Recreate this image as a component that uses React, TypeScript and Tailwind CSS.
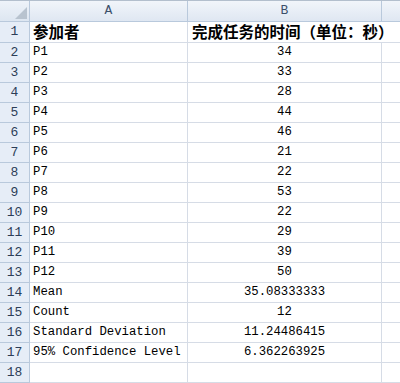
const ROWS: [string, string][] = [
  ["P1", "34"],
  ["P2", "33"],
  ["P3", "28"],
  ["P4", "44"],
  ["P5", "46"],
  ["P6", "21"],
  ["P7", "22"],
  ["P8", "53"],
  ["P9", "22"],
  ["P10", "29"],
  ["P11", "39"],
  ["P12", "50"],
  ["Mean", "35.08333333"],
  ["Count", "12"],
  ["Standard Deviation", "11.24486415"],
  ["95% Confidence Level", "6.362263925"],
  ["", ""],
];

const mono = { fontFamily: '"Liberation Mono", "Noto Sans CJK SC", monospace' };
const cjk = { fontFamily: '"Noto Sans CJK SC", sans-serif' };

function RowHead({ n }: { n: number }) {
  return (
    <div className="w-[30px] shrink-0 flex items-center justify-center bg-[#e6edf7] border-r border-b border-[#b9c9dc] text-[13px] text-[#2c3d57]">
      {n}
    </div>
  );
}

export default function App() {
  return (
    <div className="w-[400px] h-[383px] overflow-hidden bg-white select-none" style={mono}>
      {/* column headers */}
      <div className="flex h-[22px] border-t border-[#b3bfcd]">
        <div className="relative w-[30px] shrink-0 bg-gradient-to-b from-[#eef3f9] to-[#dde6f1] border-r border-b border-[#b9c9dc]">
          <div
            className="absolute right-[2px] bottom-[2px] w-[12px] h-[12px] bg-[#b8c3cf]"
            style={{ clipPath: "polygon(100% 0, 100% 100%, 0 100%)" }}
          />
        </div>
        <div className="w-[158px] shrink-0 flex items-center justify-center bg-gradient-to-b from-[#f1f5fa] to-[#dfe7f2] border-r border-b border-[#b9c9dc] text-[13px] text-[#3c4f6a]">
          A
        </div>
        <div className="w-[194px] shrink-0 flex items-center justify-center bg-gradient-to-b from-[#f1f5fa] to-[#dfe7f2] border-r border-b border-[#b9c9dc] text-[13px] text-[#3c4f6a]">
          B
        </div>
        <div className="flex-1 bg-gradient-to-b from-[#f1f5fa] to-[#dfe7f2] border-b border-[#b9c9dc]" />
      </div>

      {/* row 1: headings, B1 spills into C1 */}
      <div className="flex h-[21px]">
        <RowHead n={1} />
        <div
          className="w-[158px] shrink-0 flex items-center pl-[3px] border-r border-b border-[#d6dce6] text-[15.5px] font-bold text-black whitespace-nowrap"
          style={cjk}
        >
          参加者
        </div>
        <div
          className="relative z-10 w-[194px] shrink-0 flex items-center pl-[4px] border-b border-[#d6dce6] text-[15.5px] font-bold text-black whitespace-nowrap overflow-visible"
          style={cjk}
        >
          完成任务的时间（单位：秒）
        </div>
        <div className="flex-1 border-b border-[#d6dce6]" />
      </div>

      {ROWS.map(([label, value], i) => (
        <div key={i} className="flex h-[20px]">
          <RowHead n={i + 2} />
          <div className="w-[158px] shrink-0 flex items-center pl-[3px] border-r border-b border-[#d6dce6] text-[12.3px] text-black whitespace-nowrap">
            {label}
          </div>
          <div className="w-[194px] shrink-0 flex items-center justify-center border-r border-b border-[#d6dce6] text-[12.3px] text-black">
            {value}
          </div>
          <div className="flex-1 border-b border-[#d6dce6]" />
        </div>
      ))}
    </div>
  );
}
